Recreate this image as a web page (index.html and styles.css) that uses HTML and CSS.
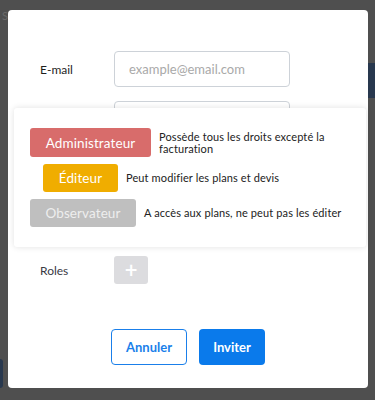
FILE: index.html
```html
<!DOCTYPE html>
<html lang="fr">
<head>
<meta charset="utf-8">
<link rel="stylesheet" href="styles.css">
</head>
<body>
<div class="backdrop">
  <span class="bg-letter">S</span>
  <span class="bg-block bg-right"></span>
  <span class="bg-block bg-left"></span>
</div>
<div class="modal">
  <div class="form">
    <div class="row">
      <label class="label">E-mail</label>
      <input class="input" type="text" placeholder="example@email.com">
    </div>
    <div class="row">
      <label class="label">Nom</label>
      <input class="input" type="text">
    </div>
    <div class="row roles-row">
      <label class="label roles">Roles</label>
      <button class="plus">+</button>
    </div>
  </div>
  <div class="actions">
    <button class="btn btn-outline">Annuler</button>
    <button class="btn btn-primary">Inviter</button>
  </div>
  <div class="popover">
    <div class="role-row">
      <span class="role role-admin">Administrateur</span>
      <span class="desc">Possède tous les droits excepté la<br>facturation</span>
    </div>
    <div class="role-row indent">
      <span class="role role-editor">Éditeur</span>
      <span class="desc">Peut modifier les plans et devis</span>
    </div>
    <div class="role-row">
      <span class="role role-viewer">Observateur</span>
      <span class="desc">A accès aux plans, ne peut pas les éditer</span>
    </div>
  </div>
</div>
</body>
</html>
```
FILE: styles.css
```css
* { box-sizing: border-box; }
html, body { margin: 0; height: 400px; overflow: hidden; }
body {
  background: #4f4f4f;
  font-family: Lato, "Noto Sans", sans-serif;
  padding: 10px 7px 12px 8px;
  position: relative;
}
.backdrop { position: absolute; inset: 0; }
.bg-letter {
  position: absolute; left: 2px; top: 9px;
  font-size: 11px; color: #6a6a6a;
}
.bg-block { position: absolute; background: #28384e; }
.bg-right { left: 368px; top: 63px; width: 7px; height: 35px; }
.bg-left { left: 0; top: 359px; width: 3px; height: 29px; border-radius: 0 3px 3px 0; }

.modal {
  position: relative;
  width: 360px;
  height: 378px;
  background: #fff;
  border-radius: 4px;
  padding: 41px 0 0 32px;
  display: flex;
  flex-direction: column;
}
.form { display: flex; flex-direction: column; gap: 14px; }
.row { display: flex; align-items: center; }
.label { width: 74px; font-size: 12px; color: #1e1e1e; }
.input {
  width: 176px; height: 36px;
  border: 1px solid #cdd2d8; border-radius: 4px;
  padding: 0 14px;
  font-family: inherit; font-size: 13px; color: #333;
  outline: none;
}
.input::placeholder { color: #a9a9a9; }
.roles-row { margin-top: 105px; }
.roles { color: #3a3a44; }
.plus {
  width: 34px; height: 28px;
  background: #dcdcdf; border: none; border-radius: 3px;
  color: #fff; font-size: 17px; font-weight: 700; line-height: 28px;
  padding: 0; font-family: "DejaVu Sans", sans-serif;
}
.actions {
  display: flex; justify-content: center; gap: 12px;
  margin-top: 45px; margin-left: -32px;
}
.btn {
  height: 36px; border-radius: 4px;
  font-family: inherit; font-size: 13px; font-weight: 700;
  padding: 0;
}
.btn-outline { width: 76px; background: #fff; border: 1px solid #1a7fea; color: #1a7fea; }
.btn-primary { width: 66px; background: #0a7aeb; border: none; color: #fff; }

.popover {
  position: absolute;
  left: 6px; top: 98px;
  width: 352px; height: 139px;
  background: #fff;
  border-radius: 3px;
  box-shadow: 0 0 6px rgba(0,0,0,0.12);
  padding: 20px 16px;
  display: flex; flex-direction: column; gap: 7px;
}
.role-row { display: flex; align-items: center; gap: 8px; }
.role-row.indent { margin-left: 13px; }
.role {
  height: 29px; border-radius: 3px;
  display: flex; align-items: center; justify-content: center;
  font-size: 13.5px; color: #fff; letter-spacing: 0.1px;
}
.role-admin { width: 121px; background: #d86c6b; }
.role-editor { width: 75px; height: 28px; background: #f0ad00; }
.role-viewer { width: 106px; height: 28px; background: #bfbfbf; color: #eeeeee; }
.desc { font-size: 11px; color: #222; line-height: 12px; letter-spacing: 0.12px; }
```
